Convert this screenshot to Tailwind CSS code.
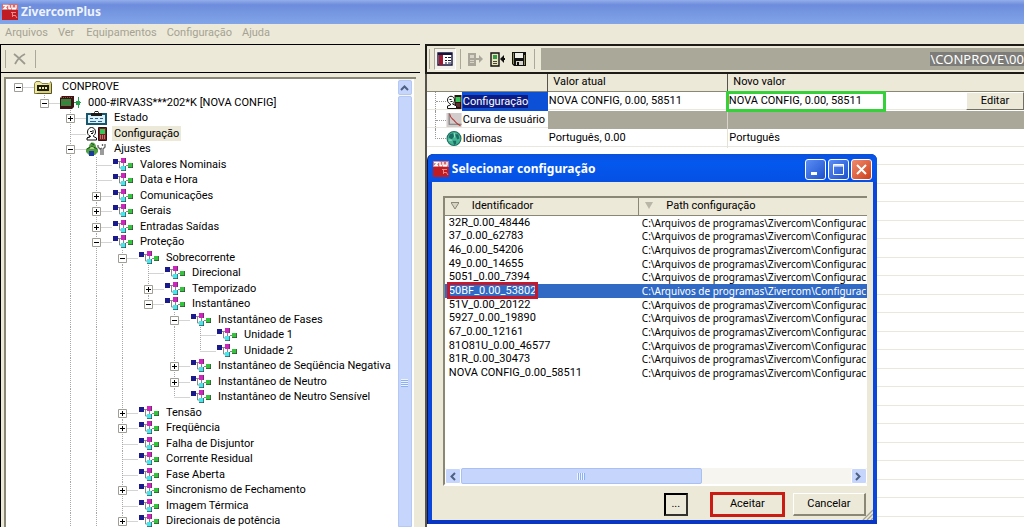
<!DOCTYPE html>
<html lang="pt">
<head>
<meta charset="utf-8">
<title>ZivercomPlus</title>
<script src="https://cdn.jsdelivr.net/npm/@tailwindcss/browser@4"></script>
</head>
<body class="h-screen overflow-hidden bg-[#ece9d8] font-[Roboto,'Liberation_Sans',sans-serif] text-[11px] leading-[14px] text-black">
<svg class="hidden">
  <symbol id="logo" viewBox="0 0 16 16"><path fill="#c01c24" d="M0 0h16v16H0z"/><path fill="#d86a6e" d="M0 0h16v6H0z"/><path fill="none" stroke="#fff" stroke-width="1.400" d="M1 1.500h4L2 4.500h3M7 1v4M7 4.500h2M10 1v3l1 1 1-1 1 1 1-1V1"/><path fill="none" stroke="#e88" d="M9 8.500h5M10 11.500h3M10.500 8v5M13 11l2 3"/></symbol>
  <symbol id="nodes" viewBox="0 0 21 14"><path fill="none" stroke="#888" d="M6 3.500h3M7.500 3v7H9M11.500 4v4M14 7.500h3"/><path fill="#1a1a8c" d="M1 1h5v5H1z"/><path fill="#d023c0" d="M9 0h5v5H9z"/><path fill="#45e6ec" d="M9 8h5v5H9z"/><path fill="#35c33f" d="M16 5h5v5h-5z"/><path fill="none" stroke="#333" stroke-opacity=".6" d="M9 12.500h5M13.500 8v5M16 9.500h5M20.500 5v5M13.500 0v5"/></symbol>
  <symbol id="folder" viewBox="0 0 21 14"><path fill="#efe9a0" stroke="#8a8440" d="M.5 3.500 2 1.500h4l2 2h8.500v10H.5z"/><path fill="#d8cf78" stroke="#55522a" d="M16.500 1.500l1 2v10h-15"/><path fill="#1d1d10" d="M3 5h12v6H3z"/><path fill="#efe9a0" d="M5 7h2v2H5zM8 7h2v2H8zM11 7h2v2h-2z"/></symbol>
  <symbol id="device" viewBox="0 0 21 14"><path fill="#3d1414" d="M0 2l2-2h12v11l-2 2H0z"/><path fill="#2c8a3c" d="M1 3h10v7H1z"/><path stroke="#b84040" d="M1 1.500h11M2 5.500h8M2 8.500h8" stroke-dasharray="1 1"/><path stroke="#28a04c" d="M14 6.500h7M18.500 1v11"/><path fill="#28a04c" d="M16 5h4v4h-4z"/></symbol>
  <symbol id="clip" viewBox="0 0 21 14"><path fill="#d8f1f8" stroke="#17566c" stroke-width="2" d="M1 3h19v10H1z"/><path fill="#1c1c1c" d="M5 2h3l1-2h3l1 2h3v3H5z"/><path fill="#fff" d="M9 1h3v1H9z"/><path stroke="#2b5e96" d="M4 7.500h3M9 7.500h3M14 7.500h3M4 10.500h6M12 10.500h4"/></symbol>
  <symbol id="person" viewBox="0 0 21 14"><path fill="#fff" stroke="#111" d="M1.500 5c0-6 8-6 8 0 0 2-1 3-2 3.500v1l3 1.500v2H1v-2l3-1V9C2 8 1.500 7 1.500 5z"/><path stroke="#111" d="M4 4.500h2M5 6.500h2M1 11l4-2M7 3v3"/><path fill="#7d1f1f" stroke="#301010" d="M12.500.5h8v13h-8z"/><path fill="#35c659" d="M14 2h5v5h-5z"/><path stroke="#f2d0d0" d="M14 9h5M14 11h5" stroke-dasharray="1 1"/></symbol>
  <symbol id="person-sm" viewBox="0 0 15 14"><path fill="#301010" d="M8 0h7v14H8z"/><path fill="#35c659" d="M9 2h5v5H9z"/><path stroke="#d88" d="M10 9h4M10 11h4" stroke-dasharray="1 1"/><path fill="#fff" stroke="#111" d="M1 5c0-5 7-5 7 0 0 2-1 3-2 4l4 2v2.500H1V11l3-1V9C2 8 1 7 1 5z"/><path stroke="#111" d="M3 4.500h2M4 6.500h2"/></symbol>
  <symbol id="adjust" viewBox="0 0 21 14"><path fill="#53a043" d="M3 5c0-6 7-6 7 0l2 2v3l-3 3H3L0 10V7z"/><path fill="#1b3a9a" d="M3 9h5v5H3z"/><path fill="#a8d878" d="M4 4h4v3H4z"/><path stroke="#1c5420" fill="none" d="M1 7l5-3 5 3M5 1l3 2"/><path fill="none" stroke="#666" stroke-width="1.300" d="M12 3v2l2 2 2-1M15 7v6M19 2v3l-2 2v6M16.500 2v2"/></symbol>
  <symbol id="curve" viewBox="0 0 14 13"><path fill="#d3cccc" d="M0 0h14v13H0z"/><path fill="none" stroke="#777" d="M2.500 0v10.500H14"/><path fill="none" stroke="#b23a3a" d="M3 1c1 5 3 4 5 7 1 2 3 2 5 4"/></symbol>
  <symbol id="globe" viewBox="0 0 14 14"><circle cx="7" cy="7" r="6.500" fill="#43b594" stroke="#1b6d60"/><path fill="#1b6d64" d="M3 3l3-1 1 3-2 3-3-2zM8 3l3 0 1 4-2 1zM6 9l3 0 0 3-2 1z"/><path stroke="#8fdcc2" fill="none" d="M2 8.500h3M7.500 2v4"/></symbol>
</svg>

<div class="flex h-full flex-col">
  <header class="flex h-6 shrink-0 items-center gap-[3px] bg-linear-to-b from-[#94aeea] via-[#6d8cdc] via-20% to-[#82a5e8] px-0.5 font-['Noto_Sans',sans-serif] text-[12px] font-bold text-[#eef3ff]">
    <svg class="size-4"><use href="#logo"/></svg>
    <h1>ZivercomPlus</h1>
  </header>
  <nav class="flex h-[17px] shrink-0 items-center gap-2.5 px-[5px] text-[#a5a294]">
    <button>Arquivos</button><button>Ver</button><button class="ml-0.5">Equipamentos</button><button>Configuração</button><button>Ajuda</button>
  </nav>

  <main class="grid min-h-0 flex-1 grid-cols-[41fr_59fr] pt-[3px]">
    <section class="flex min-h-0 min-w-0 flex-col border-l border-black" aria-label="Equipamentos">
      <div class="flex h-[29px] shrink-0 items-center gap-2 border-y border-black px-1">
        <span class="h-[18px] w-px bg-[#aca899]"></span>
        <button class="-ml-0.5 px-px" aria-label="Excluir"><svg class="h-3 w-[13px]" viewBox="0 0 13 12" fill="none" stroke="#9c9a8e" stroke-width="1.800"><path d="M1 1c4 3 7 6 11 10M12 1C8 3 4 7 2 11"/></svg></button>
        <span class="h-[18px] w-px bg-[#aca899]"></span>
      </div>
      <div class="mt-1 mr-1 ml-[3px] flex min-h-0 flex-1 border-t-2 border-l-2 border-[#8a8777] bg-white">
        <ul id="tree" role="tree" class="grid min-w-0 flex-1 auto-rows-[16px_15px] content-start overflow-hidden"></ul>
        <div class="flex w-[14px] flex-col gap-px bg-[#f6f5f0] pt-px">
          <button aria-label="Subir" class="flex h-[15px] items-center justify-center rounded-xs border border-[#b4c8f4] bg-[#c6d5fb]"><svg class="h-[7px] w-[9px]" viewBox="0 0 9 7" fill="none" stroke="#4d6185" stroke-width="2"><path d="M1 6l3.500-3.500L8 6"/></svg></button>
          <div class="flex flex-1 justify-center rounded-t-xs border border-[#b4c8f4] bg-[#c6d5fb] pt-[282px]"><span class="h-2 w-[7px] bg-[repeating-linear-gradient(#eef4fe_0_1px,#8cb0f8_1px_2px)]"></span></div>
        </div>
        <div class="w-1 border-l-2 border-white bg-[#ece9d8]"></div>
      </div>
    </section>

    <section class="relative flex min-h-0 min-w-0 flex-col pl-[5px]" aria-label="Configuração">
      <div class="flex h-[30px] shrink-0 items-center border-y-2 border-l-2 border-[#1c1b18] pl-0.5">
        <span class="h-5 w-px bg-[#aca899]"></span>
        <button aria-label="Painel" class="ml-1 flex size-[22px] items-center justify-center border border-t-[#aca899] border-r-white border-b-white border-l-[#aca899] bg-[#f4f2ea]"><svg class="h-[14px] w-4" viewBox="0 0 16 14"><path fill="#fff" stroke="#14143c" stroke-width="1.400" d="M1 1h14v12H1z"/><path fill="#14143c" d="M1 1h14v2H1z"/><path fill="#a01830" d="M2 3h4v10H2z"/><path stroke="#14143c" d="M8 5.500h2M11 5.500h3M8 8.500h2M11 8.500h3M8 11h2M11 11h3"/></svg></button>
        <span class="ml-1 h-5 w-px bg-[#aca899]"></span>
        <button aria-label="Enviar" class="ml-1.5"><svg class="h-[15px] w-4" viewBox="0 0 16 15"><path fill="#aaa79a" d="M1 1h8v13H1z"/><path fill="#d8d5c6" d="M3 3h4v3H3z"/><path stroke="#d8d5c6" d="M3 8.500h4M3 10.500h4"/><path fill="#aaa79a" d="M9 6h3V3l4 4-4 4V8H9z"/></svg></button>
        <button aria-label="Receber" class="ml-[7px]"><svg class="h-[15px] w-4" viewBox="0 0 16 15"><path fill="#e8e4b8" stroke="#111" stroke-width="1.400" d="M1 1h8v13H1z"/><path fill="#2aa04a" d="M3 3h4v4H3z"/><path stroke="#444" d="M3 9.500h4M3 11.500h4"/><path fill="#111" d="M15 6h-1V3l-4 4 4 4V8h1z"/></svg></button>
        <button aria-label="Salvar" class="ml-1.5"><svg class="size-[14px]" viewBox="0 0 14 14"><path fill="#111" d="M0 0h14v14H2l-2-2z"/><path fill="#f1f0e6" d="M3 1h8v5H3z"/><path fill="#8c8a4c" d="M1 1h1v11H1zM12 3h1v10h-1z"/><path fill="#d8d6cc" d="M4 9h7v4H4z"/><path fill="#111" d="M5 10h2v3H5z"/></svg></button>
        <span class="ml-2 h-5 w-px bg-[#aca899]"></span>
        <div class="ml-1.5 flex h-[22px] min-w-0 flex-1 items-center justify-end overflow-hidden bg-[#aaa898] font-['Noto_Sans',sans-serif] text-[13px] text-white"><span class="bg-[#7d7c78] whitespace-nowrap">\CONPROVE\00</span></div>
      </div>

      <div class="min-h-0 flex-1 border-l-2 border-[#55534a] bg-[repeating-linear-gradient(#fff_0_18px,#e9e7de_18px_19px,#fff_19px_36px,#e9e7de_36px_37px)] bg-[position:0_17px]">
        <table class="w-full table-fixed border-collapse text-left">
          <colgroup><col class="w-[121px]"><col class="w-[180px]"><col></colgroup>
          <thead>
            <tr class="h-[17px] border-b border-[#8a8777] bg-[#ece9d8]">
              <th class="border-r border-[#55534a] p-0"></th>
              <th class="border-r border-[#55534a] p-0 pl-[5px] font-normal">Valor atual</th>
              <th class="p-0 pl-[5px] font-normal">Novo valor</th>
            </tr>
          </thead>
          <tbody>
            <tr class="h-[19px]">
              <td class="p-0"><div class="flex h-[19px]"><span class="ml-2 w-[11px] border-l border-dotted border-[#999]"><i class="block h-[10px] border-b border-dotted border-[#999]"></i></span><svg class="mt-[3px] h-[14px] w-4"><use href="#person-sm"/></svg><span class="h-[19px] flex-1 bg-[#0c50d8] py-[3px] pl-px text-white"><span class="bg-[#0c1c84]">Configuração</span></span></div></td>
              <td class="p-0 pl-px">NOVA CONFIG, 0.00, 58511</td>
              <td class="p-0"><div class="flex h-[19px] items-center justify-between"><span class="-ml-0.5 h-[21px] w-[160px] border-3 border-[#35d03a] bg-white">NOVA CONFIG, 0.00, 58511</span><button class="h-[18px] w-[58px] border border-t-white border-r-[#716f64] border-b-[#716f64] border-l-white bg-[#ece9d8]">Editar</button></div></td>
            </tr>
            <tr class="h-[18px]">
              <td class="p-0"><div class="flex h-[18px]"><span class="ml-2 w-[11px] border-l border-dotted border-[#999]"><i class="block h-[10px] border-b border-dotted border-[#999]"></i></span><svg class="mt-0.5 h-[14px] w-4"><use href="#curve"/></svg><span class="py-0.5 pl-px whitespace-nowrap">Curva de usuário</span></div></td>
              <td class="border-r border-[#d8d5c8] bg-[#aaa898] p-0"></td>
              <td class="bg-[#aaa898] p-0"></td>
            </tr>
            <tr class="h-[19px]">
              <td class="p-0"><div class="flex h-[19px]"><span class="ml-2 w-[11px]"><i class="block h-[10px] border-b border-l border-dotted border-[#999]"></i></span><svg class="mt-0.5 h-[15px] w-4"><use href="#globe"/></svg><span class="py-[3px] pl-px">Idiomas</span></div></td>
              <td class="border-r border-[#e4e1d6] p-0 pl-px">Português, 0.00</td>
              <td class="p-0 pl-px">Português</td>
            </tr>
          </tbody>
        </table>
      </div>

      <div role="dialog" aria-labelledby="dlg" class="absolute top-[110px] left-2 flex h-[370px] w-[449px] flex-col rounded-t-md border-b-4 border-[#0a36c4] bg-[#0a46dc] px-1 shadow-[-1px_0_0_#06145c]">
        <div class="-mx-1 flex h-7 shrink-0 items-center rounded-t-md bg-linear-to-b from-[#0a50dc] via-[#0458ee] via-30% to-[#0650e4] px-1 pt-0.5 text-white">
          <svg class="ml-px size-4"><use href="#logo"/></svg>
          <h2 id="dlg" class="ml-[3px] flex-1 font-['Noto_Sans',sans-serif] text-[12px] font-bold">Selecionar configuração</h2>
          <div class="flex gap-0.5 pr-px">
            <button aria-label="Minimizar" class="flex size-[21px] items-center justify-center rounded-[3px] border border-white bg-linear-to-br from-[#5c8df4] to-[#1c50cc]"><svg class="size-[13px]" viewBox="0 0 13 13"><path fill="#fff" d="M2 9h6v3H2z"/></svg></button>
            <button aria-label="Maximizar" class="flex size-[21px] items-center justify-center rounded-[3px] border border-white bg-linear-to-br from-[#5c8df4] to-[#1c50cc]"><svg class="size-[13px]" viewBox="0 0 13 13"><path fill="none" stroke="#fff" d="M1.500 1.500h10v10h-10zM1 3h11M1 2h11"/></svg></button>
            <button aria-label="Fechar" class="flex size-[21px] items-center justify-center rounded-[3px] border border-white bg-linear-to-br from-[#ee8a6c] to-[#cc3c14]"><svg class="size-[13px]" viewBox="0 0 13 13"><path stroke="#fff" stroke-width="2" d="M2 2l9 9M11 2l-9 9"/></svg></button>
          </div>
        </div>
        <div class="relative flex min-h-0 flex-1 flex-col bg-[#ece9d8] pt-[14px] pr-1.5 pb-1 pl-[11px]">
          <div class="flex min-h-0 flex-1 flex-col border-t-2 border-l-2 border-[#8a8777] border-b-2 border-b-white bg-white">
            <table class="w-full table-fixed border-collapse text-left">
              <colgroup><col class="w-[194px]"><col></colgroup>
              <thead>
                <tr class="h-[17px] border-b border-[#8a8777] bg-[#ece9d8]">
                  <th class="border-r border-[#8a8777] p-0 font-normal"><div class="flex items-center gap-[13px] pl-1.5"><svg class="size-2" viewBox="0 0 8 8"><path fill="#d8d4c4" stroke="#8a8777" d="M0 .500h8L4 7z"/></svg>Identificador</div></th>
                  <th class="p-0 font-normal"><div class="flex items-center gap-[13px] pl-1.5"><svg class="size-2" viewBox="0 0 8 8"><path fill="#b9b6a8" d="M0 0h8L4 7z"/></svg>Path configuração</div></th>
                </tr>
              </thead>
            </table>
            <ul id="files" role="listbox" aria-label="Configurações" class="grid min-h-0 flex-1 auto-rows-[14px_13px_14px] content-start overflow-hidden"></ul>
            <div class="flex h-4 shrink-0 bg-[#f6f5f0]">
              <button aria-label="Esquerda" class="flex w-4 items-center justify-center rounded-xs border border-white bg-[#c6d5fb]"><svg class="h-[9px] w-[7px]" viewBox="0 0 7 9" fill="none" stroke="#4d6185" stroke-width="2"><path d="M6 1L2.500 4.500 6 8"/></svg></button>
              <div class="flex w-[241px] items-center justify-center rounded-xs border border-[#a9c0f2] bg-[#c6d5fb]"><span class="h-[7px] w-2 bg-[repeating-linear-gradient(to_right,#eef4fe_0_1px,#8cb0f8_1px_2px)]"></span></div>
              <button aria-label="Direita" class="ml-auto flex w-4 items-center justify-center rounded-xs border border-white bg-[#c6d5fb]"><svg class="h-[9px] w-[7px]" viewBox="0 0 7 9" fill="none" stroke="#4d6185" stroke-width="2"><path d="M1 1l3.500 3.500L1 8"/></svg></button>
            </div>
          </div>
          <div class="mt-1.5 flex h-6 shrink-0 items-center justify-end gap-2 pr-px">
            <button class="mr-[14px] h-[23px] w-6 border-2 border-t-black border-r-[#33322c] border-b-[#33322c] border-l-black">...</button>
            <button class="h-[25px] w-[75px] border-3 border-[#c81c14]">Aceitar</button>
            <button class="h-[23px] w-[73px] border-t border-r-2 border-b-2 border-l border-t-white border-r-[#8a8777] border-b-[#8a8777] border-l-white">Cancelar</button>
          </div>
          <svg class="absolute right-0 bottom-0 size-[11px]" viewBox="0 0 11 11" stroke="#a5a294" stroke-width="1.300"><path d="M1 11L11 1M5 11l6-6M9 11l2-2"/></svg>
        </div>
      </div>
    </section>
  </main>
</div>

<script>
// [level, expander, label, icon]
const items = [
  [0,'-','CONPROVE','folder'],
  [1,'-','000-#IRVA3S***202*K [NOVA CONFIG]','device'],
  [2,'+','Estado','clip'],
  [2,'','Configuração','person'],
  [2,'-','Ajustes','adjust'],
  [3,'','Valores Nominais'],
  [3,'','Data e Hora'],
  [3,'+','Comunicações'],
  [3,'+','Gerais'],
  [3,'+','Entradas Saídas'],
  [3,'-','Proteção'],
  [4,'-','Sobrecorrente'],
  [5,'','Direcional'],
  [5,'+','Temporizado'],
  [5,'-','Instantâneo'],
  [6,'-','Instantâneo de Fases'],
  [7,'','Unidade 1'],
  [7,'','Unidade 2'],
  [6,'+','Instantâneo de Seqüência Negativa'],
  [6,'+','Instantâneo de Neutro'],
  [6,'','Instantâneo de Neutro Sensível'],
  [4,'+','Tensão'],
  [4,'+','Freqüência'],
  [4,'','Falha de Disjuntor'],
  [4,'','Corrente Residual'],
  [4,'','Fase Aberta'],
  [4,'+','Sincronismo de Fechamento'],
  [4,'','Imagem Térmica'],
  [4,'+','Direcionais de potência'],
];
// Levels whose branch goes on below the last visible row
const open = new Set([2, 3, 4]);
const continues = (i, level) => {
  for (let j = i + 1; j < items.length; j++) {
    if (items[j][0] < level) return false;
    if (items[j][0] === level) return true;
  }
  return open.has(level);
};
document.getElementById('tree').innerHTML = items.map(([level, exp, label, icon], i) => {
  let d = '', box = '';
  for (let l = 0; l <= level; l++) {
    const x = l * 26 + 12.5, more = continues(i, l);
    if (l < level) { if (more) d += `M${x} 0V16`; }
    else d += `M${x} ${level ? 0 : 8}V${more ? 16 : 8}M${x} 8.5H${x + 15}`;
  }
  if (exp) {
    const x = level * 26 + 8.5;
    box = `<path fill="#fff" stroke="#a09e94" d="M${x} 4.500h8v8h-8z"/><path stroke="#000" d="M${x + 1.5} 8.500h5${exp === '+' ? `M${x + 4} 6v5` : ''}"/>`;
  }
  return `<li role="treeitem" class="flex items-start leading-[15px] whitespace-nowrap"><svg class="h-full shrink-0" style="width:${level * 26 + 28}px" fill="none"><path stroke="#a8a8a8" stroke-dasharray="1 1" d="${d}"/>${box}</svg><svg class="mt-px h-[14px] w-[21px] shrink-0"><use href="#${icon || 'nodes'}"/></svg><span class="${label === 'Configuração' ? 'ml-[5px] bg-[#ece9d8] px-0.5' : 'ml-[5px] px-0.5'}">${label}</span></li>`;
}).join('');

const files = ['32R_0.00_48446','37_0.00_62783','46_0.00_54206','49_0.00_14655','5051_0.00_7394','50BF_0.00_53802','51V_0.00_20122','5927_0.00_19890','67_0.00_12161','81O81U_0.00_46577','81R_0.00_30473','NOVA CONFIG_0.00_58511'];
document.getElementById('files').innerHTML = files.map((f, i) => `<li role="option" aria-selected="${i === 5}" class="${i === 5 ? 'flex items-center bg-[#316ac5] text-white' : 'flex items-center'}"><span class="w-[197px] shrink-0"><span class="${i === 5 ? 'ml-1 inline-block w-[87px] leading-[13px] outline-3 -outline-offset-1 outline-[#c4182c]' : 'ml-1 inline-block'}">${f}</span></span><span class="font-['Noto_Sans',sans-serif] text-[10px] whitespace-nowrap">C:\\Arquivos de programas\\Zivercom\\Configurac</span></li>`).join('');
</script>
</body>
</html>
